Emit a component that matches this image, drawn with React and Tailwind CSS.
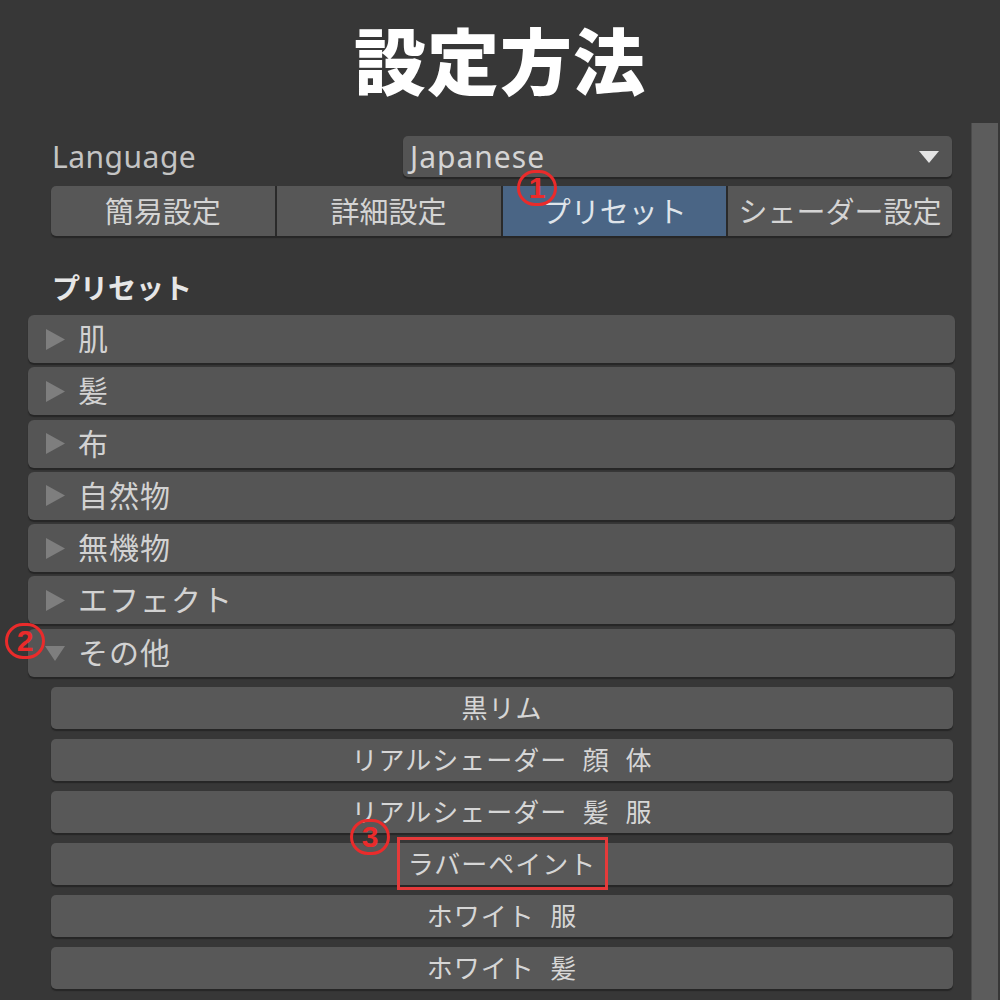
import React from 'react';

const categories = ['肌', '髪', '布', '自然物', '無機物', 'エフェクト'];
const presets = ['黒リム', 'リアルシェーダー 顔 体', 'リアルシェーダー 髪 服', 'ラバーペイント', 'ホワイト 服', 'ホワイト 髪'];
const tabs = ['簡易設定', '詳細設定', 'プリセット', 'シェーダー設定'];

function Arrow({ down }) {
  return (
    <svg width="20" height="21" viewBox="0 0 20 21" className="shrink-0">
      {down ? <polygon points="0,4 20,4 10,19" fill="#7e7e7e" /> : <polygon points="1,0 20,10.5 1,21" fill="#7e7e7e" />}
    </svg>
  );
}

function Mark({ n, className }) {
  return (
    <div
      className={`absolute w-[40px] h-[36px] rounded-full border-[3.5px] border-[#ea2b2b] text-[#ea2b2b] flex items-center justify-center text-[30px] font-black leading-none ${className}`}
      style={{ fontFamily: '"Liberation Sans", sans-serif' }}
    >
      {n}
    </div>
  );
}

function Panel({ label, open }) {
  return (
    <div className="h-[48px] rounded-[6px] bg-[#555555] shadow-[0_2px_1px_#262626] flex items-center pl-[17px] gap-[13px]">
      <Arrow down={open} />
      <span className="text-[30px] tracking-[1px] text-[#d2d2d2] leading-none">{label}</span>
    </div>
  );
}

export default function App() {
  return (
    <div
      className="relative w-[1000px] h-[1000px] overflow-hidden bg-[#373737]"
      style={{ fontFamily: '"Noto Sans", "Noto Sans CJK JP", sans-serif' }}
    >
      <h1 className="h-[123px] pt-[25px] text-center text-white text-[72px] font-black leading-none tracking-[1px]">
        設定方法
      </h1>

      <div className="flex">
        <div className="w-[927px] ml-[28px]">
          {/* language */}
          <div className="mt-[13px] ml-[23px] mr-[3px] flex items-center">
            <span className="w-[352px] pl-[1px] text-[30px] tracking-[0.5px] text-[#c4c4c4] leading-none">Language</span>
            <div className="flex-1 h-[41px] rounded-[5px] bg-[#545454] shadow-[0_2px_1px_#262626] flex items-center justify-between pl-[7px] pr-[13px]">
              <span className="text-[30px] tracking-[1px] text-[#d4d4d4] leading-none">Japanese</span>
              <svg width="20" height="12" viewBox="0 0 20 12">
                <polygon points="0,0 20,0 10,12" fill="#e4e4e4" />
              </svg>
            </div>
          </div>

          {/* tabs */}
          <div className="mt-[9px] ml-[23px] mr-[3px] h-[50px] grid grid-cols-4 gap-[2px] rounded-[5px] overflow-hidden bg-[#2a2a2a] shadow-[0_2px_1px_#262626]">
            {tabs.map((t, i) => (
              <div
                key={t}
                className={`flex items-center justify-center text-[29px] leading-none ${i === 2 ? 'bg-[#4a6585] text-[#dfe4ea]' : 'bg-[#575757] text-[#d4d4d4]'}`}
              >
                {t}
              </div>
            ))}
          </div>

          {/* heading */}
          <div className="mt-[38px] ml-[24px] h-[30px] text-[28px] font-bold text-[#e6e6e6] leading-none">プリセット</div>

          {/* panels */}
          <div className="mt-[11px] flex flex-col gap-[4.3px]">
            {categories.map((c) => (
              <Panel key={c} label={c} />
            ))}
            <Panel label="その他" open />
          </div>

          {/* preset buttons */}
          <div className="mt-[10px] ml-[23px] mr-[2px] flex flex-col gap-[10px]">
            {presets.map((p) => (
              <div
                key={p}
                className="h-[42px] rounded-[5px] bg-[#585858] shadow-[0_2px_1px_#262626] flex items-center justify-center text-[26px] tracking-[1px] text-[#d6d6d6] leading-none whitespace-pre"
              >
                {p.replace(/ /g, '  ')}
              </div>
            ))}
          </div>
        </div>

        <div className="ml-[16px] w-[27px] h-[877px] bg-[#5c5c5c] border-l border-[#4a4a4a]" />
      </div>

      {/* annotations */}
      <Mark n="1" className="left-[517px] top-[170px]" />
      <Mark n="2" className="left-[5px] top-[623px]" />
      <Mark n="3" className="left-[350px] top-[819px]" />
      <div className="absolute left-[397px] top-[837px] w-[211px] h-[53px] border-[3px] border-[#e53a3a]" />
    </div>
  );
}
